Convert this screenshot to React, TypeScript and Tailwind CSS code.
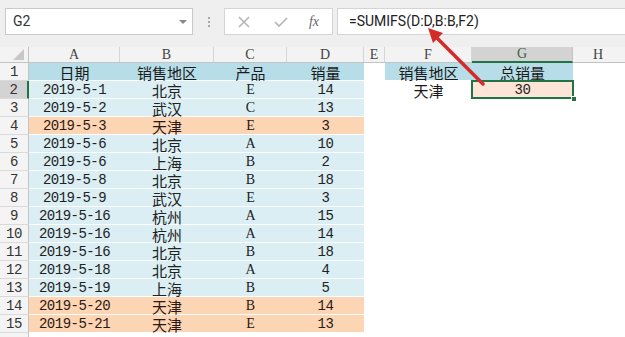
import React from "react";

type Fill = "hdr" | "blue" | "orange";

const rows: { d: string; r: string; p: string; q: string; f: Fill }[] = [
  { d: "日期", r: "销售地区", p: "产品", q: "销量", f: "hdr" },
  { d: "2019-5-1", r: "北京", p: "E", q: "14", f: "blue" },
  { d: "2019-5-2", r: "武汉", p: "C", q: "13", f: "blue" },
  { d: "2019-5-3", r: "天津", p: "E", q: "3", f: "orange" },
  { d: "2019-5-6", r: "北京", p: "A", q: "10", f: "blue" },
  { d: "2019-5-6", r: "上海", p: "B", q: "2", f: "blue" },
  { d: "2019-5-8", r: "北京", p: "B", q: "18", f: "blue" },
  { d: "2019-5-9", r: "武汉", p: "E", q: "3", f: "blue" },
  { d: "2019-5-16", r: "杭州", p: "A", q: "15", f: "blue" },
  { d: "2019-5-16", r: "杭州", p: "A", q: "14", f: "blue" },
  { d: "2019-5-16", r: "北京", p: "B", q: "18", f: "blue" },
  { d: "2019-5-18", r: "北京", p: "A", q: "4", f: "blue" },
  { d: "2019-5-19", r: "上海", p: "B", q: "5", f: "blue" },
  { d: "2019-5-20", r: "天津", p: "B", q: "14", f: "orange" },
  { d: "2019-5-21", r: "天津", p: "E", q: "13", f: "orange" },
];

const fillCls: Record<Fill, string> = {
  hdr: "bg-[#b7dee8] text-[#1a1a1a]",
  blue: "bg-[#daeef3] text-[#222]",
  orange: "bg-[#fcd5b4] text-[#2e1812]",
};

const cols = "grid grid-cols-[29px_91px_94px_73px_77px_21px_87px_101px_1fr]";

const mono = "[font-family:'Liberation_Mono','Noto_Sans_CJK_SC',monospace] text-[14px] tracking-[-0.5px]";
const cjk = "[font-family:'Noto_Sans_CJK_SC',sans-serif] text-[15px]";
const serif = "[font-family:'Liberation_Serif',serif] text-[14px]";

function Cell({ children, cls = "", font = mono }: { children?: React.ReactNode; cls?: string; font?: string }) {
  return (
    <div className={`h-[18px] flex items-center justify-center border-b border-white leading-none pt-[1px] ${font} ${cls}`}>
      {children}
    </div>
  );
}

export default function App() {
  return (
    <div className="w-[625px] h-[337px] overflow-hidden bg-white relative">
      {/* Toolbar */}
      <div className="h-[47px] bg-[#efefef] flex items-start pt-[8px]">
        <div className="ml-[5px] w-[188px] h-[27px] bg-white border border-[#c9c9c9] flex items-center justify-between pl-[7px] pr-[5px]">
          <span className="[font-family:'Roboto',sans-serif] text-[14px] text-[#333]">G2</span>
          <span className="w-0 h-0 border-l-[4px] border-r-[4px] border-t-[4px] border-l-transparent border-r-transparent border-t-[#888]" />
        </div>
        <div className="w-[31px] h-[27px] flex flex-col items-center justify-center gap-[2px]">
          <span className="w-[2px] h-[2px] bg-[#a8a8a8]" />
          <span className="w-[2px] h-[2px] bg-[#a8a8a8]" />
          <span className="w-[2px] h-[2px] bg-[#a8a8a8]" />
        </div>
        <div className="w-[109px] h-[27px] bg-white border border-[#d4d4d4] flex items-center">
          <span className="w-[38px] flex justify-center">
            <svg width="12" height="12" viewBox="0 0 12 12"><path d="M1 1 L11 11 M11 1 L1 11" stroke="#b5b5b5" strokeWidth="1.6" /></svg>
          </span>
          <span className="w-[36px] flex justify-center">
            <svg width="14" height="12" viewBox="0 0 14 12"><path d="M1 6 L5 10 L13 2" stroke="#b5b5b5" strokeWidth="1.6" fill="none" /></svg>
          </span>
          <span className="w-[30px] flex justify-center [font-family:'Liberation_Serif',serif] italic text-[14px] text-[#666]">
            fx
          </span>
        </div>
        <div className="ml-[4px] flex-1 h-[27px] bg-white border border-r-0 border-[#d4d4d4] flex items-center pl-[11px]">
          <span className="[font-family:'Roboto',sans-serif] text-[14px] text-[#222]">=SUMIFS(D:D,B:B,F2)</span>
        </div>
      </div>

      {/* Column headers */}
      <div className={`${cols} h-[16px] bg-[#f3f3f3] border-b border-[#c4c4c4]`}>
        <div className="border-r border-[#c4c4c4] flex items-end justify-end pr-[4px] pb-[2px]">
          <svg width="11" height="11" viewBox="0 0 11 11"><path d="M0 11 L11 11 L11 0 Z" fill="#c7c7c7" /></svg>
        </div>
        {["A", "B", "C", "D", "E", "F"].map((c) => (
          <div key={c} className={`border-r border-[#d6d6d6] flex items-center justify-center leading-none text-[#444] ${serif}`}>
            {c}
          </div>
        ))}
        <div className={`bg-[#d3d3d3] border-r border-[#c4c4c4] border-b-2 border-b-[#217346] -mb-[1px] flex items-center justify-center leading-none text-[#3d5f4a] ${serif}`}>
          G
        </div>
        <div className={`flex items-center justify-center leading-none text-[#444] ${serif} pr-[2px]`}>H</div>
      </div>

      {/* Rows */}
      {rows.map((row, i) => {
        const n = i + 1;
        const fc = fillCls[row.f];
        const isHdr = row.f === "hdr";
        const txt = isHdr ? cjk : mono;
        return (
          <div key={n} className={cols}>
            <div
              className={`h-[18px] flex items-center justify-center leading-none pt-[1px] border-b border-[#dadada] ${mono} ${
                n === 2 ? "bg-[#d3d3d3] border-r-2 border-r-[#217346] text-[#333]" : "bg-[#f4f4f4] border-r border-r-[#c4c4c4] text-[#333]"
              }`}
            >
              {n}
            </div>
            <Cell cls={fc} font={txt}>{row.d}</Cell>
            <Cell cls={fc} font={cjk}>{row.r}</Cell>
            <Cell cls={fc} font={isHdr ? cjk : serif}>{row.p}</Cell>
            <Cell cls={fc} font={txt}>{row.q}</Cell>
            <div />
            {n === 1 ? (
              <Cell cls={fillCls.hdr} font={cjk}>销售地区</Cell>
            ) : n === 2 ? (
              <Cell cls="text-[#1a1a1a]" font={cjk}>天津</Cell>
            ) : (
              <div />
            )}
            {n === 1 ? (
              <Cell cls={fillCls.hdr} font={cjk}>总销量</Cell>
            ) : n === 2 ? (
              <div className="relative">
                <Cell cls="bg-[#fce4d6] text-[#222]">30</Cell>
                <div className="absolute -left-[1px] -top-[1px] -right-[1px] bottom-0 border-2 border-[#217346] pointer-events-none" />
                <div className="absolute -right-[4px] -bottom-[3px] w-[6px] h-[6px] bg-[#217346] border border-white" />
              </div>
            ) : (
              <div />
            )}
            <div />
          </div>
        );
      })}
      <div className={cols}>
        <div className="h-[18px] bg-[#f4f4f4] border-r border-[#c4c4c4]" />
      </div>

      {/* Red arrow */}
      <svg className="absolute left-0 top-0 pointer-events-none" width="625" height="337" viewBox="0 0 625 337">
        <line x1="483" y1="84" x2="437" y2="38" stroke="#d42a2a" strokeWidth="3.5" strokeLinecap="round" />
        <path d="M428 28 L443 33 L433 43 Z" fill="#d42a2a" />
      </svg>
    </div>
  );
}
